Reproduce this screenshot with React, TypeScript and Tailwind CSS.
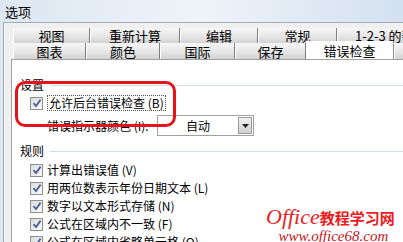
import React from "react";

const FONT = { fontFamily: '"Noto Sans CJK SC", "Noto Sans", sans-serif' };

function Check() {
  return (
    <span className="flex h-[13px] w-[13px] shrink-0 items-center justify-center border border-[#8e8f8f] bg-gradient-to-br from-[#dcdcdc] to-[#fbfbfb]">
      <svg width="10" height="10" viewBox="0 0 10 10">
        <path d="M1.5 5.2 L4 8 L8.6 1.6" fill="none" stroke="#4a6397" strokeWidth="1.8" />
      </svg>
    </span>
  );
}

function Tab({ label, w, active }: { label: string; w: number; active?: boolean }) {
  if (active) {
    return (
      <div
        className="-mt-[2px] flex h-[19px] shrink-0 items-center justify-center border-r border-r-[#8c8c8c] bg-white text-[13px] leading-none text-black"
        style={{ width: w }}
      >
        {label}
      </div>
    );
  }
  return (
    <div
      className="flex h-full shrink-0 items-center justify-center whitespace-nowrap border-l border-r border-l-white border-r-[#7d7d7d] bg-gradient-to-b from-[#f6f6f6] via-[#e8e8e8] to-[#d3d3d3] text-[13px] leading-none text-black"
      style={{ width: w }}
    >
      {label}
    </div>
  );
}

function Rule({ label, k }: { label: string; k: string }) {
  return (
    <div className="flex h-[18px] items-center gap-[4px] pl-[18px]">
      <Check />
      <span className="whitespace-nowrap text-[12px] leading-none">
        {label} ({k})
      </span>
    </div>
  );
}

export default function App() {
  return (
    <div
      className="relative flex h-[242px] w-[403px] flex-col overflow-hidden bg-gradient-to-r from-[#dde7f2] via-[#eef3f9] to-[#d4e1f0] text-black"
      style={FONT}
    >
      <div className="flex h-[22px] shrink-0 items-center pl-[5px] text-[13px] leading-none text-black">选项</div>
      <div className="ml-[3px] flex flex-1 flex-col border-l border-t border-[#a3adb8] bg-[#f0f0f0] pl-[7px]">
        {/* Tabs */}
        <div className="mt-[5px] flex h-[15px] pl-[2px]">
          <Tab label="视图" w={77} />
          <Tab label="重新计算" w={90} />
          <Tab label="编辑" w={78} />
          <Tab label="常规" w={79} />
          <div className="flex h-full w-[80px] shrink-0 items-center whitespace-nowrap border-l border-l-white bg-gradient-to-b from-[#f6f6f6] via-[#e8e8e8] to-[#d3d3d3] pl-[17px] text-[13px] leading-none">
            1-2-3 的帮助
          </div>
        </div>
        <div className="flex h-[16px] pl-[2px]">
          <Tab label="图表" w={73} />
          <Tab label="颜色" w={74} />
          <Tab label="国际" w={75} />
          <Tab label="保存" w={71} />
          <Tab label="错误检查" w={88} active />
          <Tab label="" w={30} />
        </div>
        {/* Panel */}
        <div className="relative flex-1 border-l border-t border-[#a0a0a0] bg-white">
          <div className="mt-[18px] flex h-[14px] items-center">
            <span className="pl-[8px] text-[12px] leading-none">设置</span>
            <div className="ml-[6px] h-px flex-1 bg-[#d5dfe5]" />
          </div>
          <div className="mt-[2px] flex h-[18px] items-center gap-[4px] pl-[18px]">
            <Check />
            <span className="border border-dotted border-[#555] px-[1px] text-[12px] leading-[14px]">
              允许后台错误检查 (B)
            </span>
          </div>
          <div className="mt-[3px] flex h-[21px] items-center pl-[35px]">
            <span className="w-[110px] whitespace-nowrap text-[12px] leading-none">错误指示器颜色 (I):</span>
            <div className="flex h-[21px] w-[97px] items-center border border-[#a0a0a0] bg-white">
              <span className="flex-1 pl-[28px] text-[12px] leading-none">自动</span>
              <div className="mr-[1px] flex h-[17px] w-[14px] items-center justify-center border border-[#9a9a9a] bg-gradient-to-b from-[#f2f2f2] to-[#cfcfcf]">
                <svg width="7" height="4" viewBox="0 0 7 4">
                  <path d="M0 0 H7 L3.5 4 Z" fill="#222" />
                </svg>
              </div>
            </div>
          </div>
          <div className="mt-[8px] flex h-[14px] items-center">
            <span className="pl-[8px] text-[12px] leading-none">规则</span>
            <div className="ml-[6px] h-px flex-1 bg-[#d5dfe5]" />
          </div>
          <div className="mt-[3px] flex flex-col">
            <Rule label="计算出错误值" k="V" />
            <Rule label="用两位数表示年份日期文本" k="L" />
            <Rule label="数字以文本形式存储" k="N" />
            <Rule label="公式在区域内不一致" k="F" />
            <Rule label="公式在区域内省略单元格" k="O" />
          </div>
          {/* red highlight */}
          <div className="absolute left-[3px] top-[21px] h-[46px] w-[161px] rounded-[10px] border-[3px] border-[#e3141c]" />
          {/* watermark */}
          <div className="absolute left-[254px] top-[146px] flex flex-col items-center leading-none">
            <div className="flex items-baseline whitespace-nowrap text-[#ec1c24]">
              <span className="text-[22px] italic" style={{ fontFamily: '"Liberation Serif", serif' }}>
                Office
              </span>
              <span className="text-[15px] font-bold">教程学习网</span>
            </div>
            <span
              className="mt-[1px] whitespace-nowrap pl-[6px] text-[15px] italic text-[#c3141b]"
              style={{ fontFamily: '"Liberation Serif", serif' }}
            >
              www.office68.com
            </span>
          </div>
        </div>
      </div>
    </div>
  );
}
